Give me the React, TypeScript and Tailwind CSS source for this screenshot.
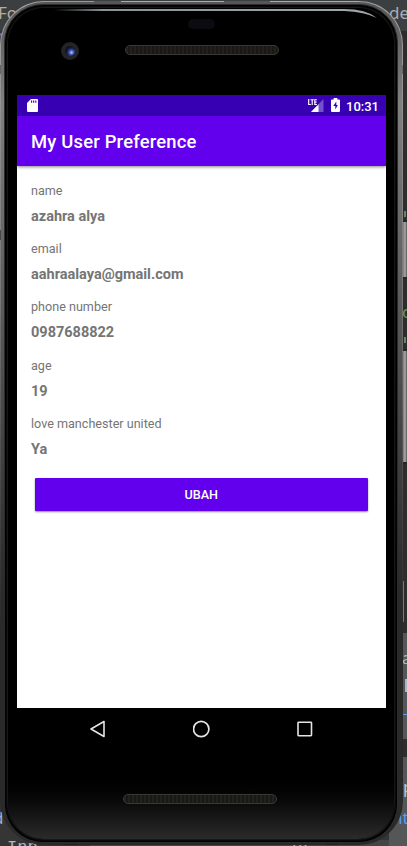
const fields = [
  { label: "name", value: "azahra alya" },
  { label: "email", value: "aahraalaya@gmail.com" },
  { label: "phone number", value: "0987688822" },
  { label: "age", value: "19" },
  { label: "love manchester united", value: "Ya" },
];

/* Slivers of the code editor that show around the phone */
function Editor() {
  return (
    <div className="absolute inset-0 flex justify-between bg-[#353535] font-['Noto_Sans',sans-serif] text-[17px] leading-5 text-[#a9b7c6]">
      <div className="flex w-[90px] flex-col">
        <div className="h-[31px] bg-[#3c3f41] pt-[3px] text-[#bba99c]">
          <span className="-ml-[2px]">Fo</span>
        </div>
        <div className="mt-[2px] h-[3px] w-1 bg-[#795ba0]" />
        <div className="mt-auto h-[30px] text-[#9daccf]">
          <span className="-ml-[7px]">d</span>
        </div>
        <div className="h-[8px] overflow-hidden pl-[7px] font-['Liberation_Mono',monospace]">Inp</div>
      </div>
      <div className="flex flex-1 flex-col justify-between">
        <div className="h-[31px] bg-[#3c3f41]" />
        <div className="h-[6px] overflow-hidden bg-[#454545] pl-[202px] font-['Liberation_Mono',monospace] leading-3">pr</div>
      </div>
      <div className="flex w-[18px] flex-col">
        <div className="h-[31px] shrink-0 bg-[#3c3f41] pt-[3px] text-[#a9adb3]">de</div>
        <div className="flex h-[602px] shrink-0 flex-col items-end bg-[#2d2d2d]">
          <div className="mt-[180px] mr-px h-[6px] w-[2px] bg-[#6a8759]" />
          <div className="mt-[85px] h-5 w-[5px] text-[#6a9955]">c</div>
          <div className="mt-[15px] mr-px h-[6px] w-[2px] bg-[#6a8759]" />
          <div className="mt-[238px] mr-[3px] h-[41px] w-px bg-[#777]" />
        </div>
        <div className="flex flex-1 flex-col items-end bg-[#545658]">
          <div className="mt-[15px] h-5 w-[5px]">a</div>
          <div className="mt-[11px] h-[13px] w-[2px] bg-[#a9b7c6]" />
          <div className="mt-[22px] h-px w-1 bg-[#589df6]" />
          <div className="mt-[24px] h-[18px] w-full bg-[#2d2d2d]" />
          <div className="mt-[20px] h-5 w-1 text-[#c4c4c4]">p</div>
          <div className="mt-[11px] h-5 w-[15px] text-[#589df6]">nt</div>
        </div>
      </div>
    </div>
  );
}

/* Power and volume keys, half hidden by the case */
function SideKeys() {
  const key =
    "w-1 rounded-r-[2px] border-y-2 border-[#252525] bg-linear-to-r from-[#777] via-[#aaa] to-[#555]";
  return (
    <div className="absolute inset-y-0 right-0 flex flex-col pt-[220px]">
      <div className={`${key} h-[59px]`} />
      <div className={`${key} mt-[70px] h-[115px]`} />
    </div>
  );
}

function Speaker() {
  return (
    <div className="h-[10px] w-[154px] rounded-full border border-[#383836] bg-[repeating-linear-gradient(90deg,#23211d_0px,#23211d_2px,#191815_2px,#191815_4px)]" />
  );
}

function StatusBar() {
  return (
    <div className="flex h-[21px] shrink-0 items-center bg-[#3700b3] pr-[7px] pl-[10px] text-white">
      <svg className="h-[13px] w-[11px]" viewBox="0 0 11 13">
        <path d="M4 0h6q1 0 1 1v11q0 1-1 1H1q-1 0-1-1V4z" fill="currentColor" />
        <path d="M4.600 1.500v2.300M6.700 1.500v2.300M8.800 1.500v2.300" stroke="#3700b3" strokeWidth="1.100" />
      </svg>
      <svg className="ml-auto h-[14px] w-[16px]" viewBox="0 0 16 14">
        <path d="M15.500 0v13H3z" fill="#7651cb" />
        <path d="M10.500 5.200V13H3z" fill="white" />
        <path d="M0 0h9.500v6.500H0z" fill="#3700b3" />
        <path
          d="M.7 0v5.500h2.100M2.500.7h3.300M4.200.7v5.300M8.900.7H6.800v4.800h2.100M6.800 3.100h1.800"
          fill="none"
          stroke="white"
          strokeWidth="1.150"
        />
      </svg>
      <svg className="mb-px ml-[7px] h-[14px] w-[9px]" viewBox="0 0 9 14">
        <path d="M2.700 0h3.600v1.400H8q1 0 1 1V13q0 1-1 1H1q-1 0-1-1V2.400q0-1 1-1h1.700z" fill="white" />
        <path d="M5.300 3.500 2.300 8.100h2v3.400L6.900 7H5.300z" fill="#3700b3" />
      </svg>
      <span className="ml-[6px] pt-px text-[13px] leading-none font-medium">10:31</span>
    </div>
  );
}

function NavBar() {
  return (
    <div className="flex h-[43px] shrink-0 items-center justify-between px-[72px] pb-px text-[#e5e5e5]">
      <svg className="h-[18px] w-[18px]" viewBox="0 0 18 18" fill="none" stroke="currentColor" strokeWidth="1.600">
        <path d="M15 1.500v15L2 9z" strokeLinejoin="round" />
      </svg>
      <svg className="h-[18px] w-[18px]" viewBox="0 0 18 18" fill="none" stroke="currentColor" strokeWidth="1.700">
        <circle cx="8.200" cy="9" r="7.700" />
      </svg>
      <svg className="h-[18px] w-[18px]" viewBox="0 0 18 18" fill="none" stroke="currentColor" strokeWidth="1.600">
        <rect x="2" y="2.200" width="13.500" height="13.500" rx=".6" />
      </svg>
    </div>
  );
}

function Screen() {
  return (
    <div className="flex h-[613px] shrink-0 flex-col bg-white">
      <StatusBar />
      <header className="z-10 flex h-[50px] shrink-0 items-center bg-[#6200ee] pt-[2px] pl-[14px] text-[18.400px] font-medium tracking-[0.2px] text-white shadow-[0_1px_3px_#0007]">
        My User Preference
      </header>
      <main className="flex flex-col px-[14px] pt-[15.600px] text-[#757575]">
        <dl>
          {fields.map((f) => (
            <div key={f.label} className="h-[58.400px]">
              <dt className="pt-px text-[12.600px] leading-[16px]">{f.label}</dt>
              <dd className="mt-[9px] text-[14.500px] leading-[18px] font-bold">{f.value}</dd>
            </div>
          ))}
        </dl>
        <button className="mr-[4px] ml-[3.500px] mt-[4.400px] h-[33px] rounded-[1px] bg-[#6200ee] pt-[2px] text-[12.600px] font-medium text-white shadow-[0_1px_2px_#0007]">
          UBAH
        </button>
      </main>
    </div>
  );
}

function TopBezel() {
  return (
    <div className="flex h-[91px] shrink-0 flex-col pt-[4px]">
      <svg className="ml-[34px] h-[11px] w-[336px] shrink-0" viewBox="0 0 336 11" fill="none">
        <defs>
          <linearGradient id="glint">
            <stop offset="0" stopColor="#899393" stopOpacity="0" />
            <stop offset=".15" stopColor="#899393" />
            <stop offset="1" stopColor="#a1aaaa" />
          </linearGradient>
        </defs>
        <path d="M3 1h290q22 0 33 9-12-6-33-7H3z" fill="url(#glint)" />
      </svg>
      <div className="ml-[171px] h-[10px] w-[27px] rounded-full bg-[#0b0b11]" />
      <div className="mt-[13px] ml-[44px] flex items-center gap-[46px]">
        <div className="flex h-[18px] w-[18px] items-center justify-center rounded-full bg-[#242424]">
          <div className="h-[10px] w-[10px] rounded-full bg-[radial-gradient(circle_at_65%_65%,#b9c5ff_0,#4054b5_25%,#131a40_50%,#090b16_80%)]" />
        </div>
        <div className="mb-[3px]">
          <Speaker />
        </div>
      </div>
    </div>
  );
}

function BottomBezel() {
  return (
    <div className="flex flex-1 flex-col pt-[43px] pl-[106px]">
      <Speaker />
    </div>
  );
}

/* Antenna breaks in the metal rim */
function Rim() {
  return (
    <div className="absolute inset-0 flex justify-between">
      <div className="flex w-[5px] flex-col pt-[64px]">
        <div className="h-[9px] bg-[#666]" />
        <div className="mt-[156px] h-[10px] bg-[#484848]" />
      </div>
      <div className="flex flex-1 flex-col justify-between">
        <div className="h-[2px] bg-[linear-gradient(90deg,transparent_37px,#999_37px,#999_89px,#555_89px,#555_116px,#aaa_116px,#aaa_219px,#555_219px,#555_265px,#aaa_265px,#aaa_353px,transparent_353px)]" />
        <div className="h-[4px] bg-[linear-gradient(90deg,transparent_60px,#202020_60px,#202020_73px,transparent_73px,transparent_321px,#202020_321px,#202020_333px,transparent_333px)]" />
      </div>
      <div className="flex w-[5px] flex-col pt-[64px]">
        <div className="h-[9px] bg-[#68686b]" />
        <div className="mt-[697px] h-[9px] border-y border-[#161616] bg-[#2b2b2b]" />
      </div>
    </div>
  );
}

function Phone() {
  return (
    <div className="relative h-[844px] w-[403px] rounded-[44px] bg-linear-to-b from-[#a0a0a0] via-[#777] via-35% to-[#292929] to-75% p-px">
      <Rim />
      <div className="relative h-full rounded-[43px] bg-linear-to-b from-[#555] via-[#808080] via-12% to-[#2a2a2a] to-70% pt-[2px] pr-[4px] pb-px pl-[3px]">
        <div className="h-full rounded-[39px] border border-[#2c2c2c] bg-black p-[3px]">
          <div className="flex h-full flex-col rounded-[36px] bg-linear-to-b from-black from-91% to-[#2b2b2b] pr-[8px] pl-[9px] shadow-[0_0_2px_1px_#202020]">
            <div className="-mt-[4px] flex min-h-0 w-[369px] flex-1 flex-col">
              <TopBezel />
              <Screen />
              <NavBar />
              <BottomBezel />
            </div>
          </div>
        </div>
      </div>
    </div>
  );
}

export default function App() {
  return (
    <div className="relative h-[846px] w-[407px] overflow-hidden pt-px font-[Roboto,sans-serif]">
      <Editor />
      <SideKeys />
      <Phone />
    </div>
  );
}
